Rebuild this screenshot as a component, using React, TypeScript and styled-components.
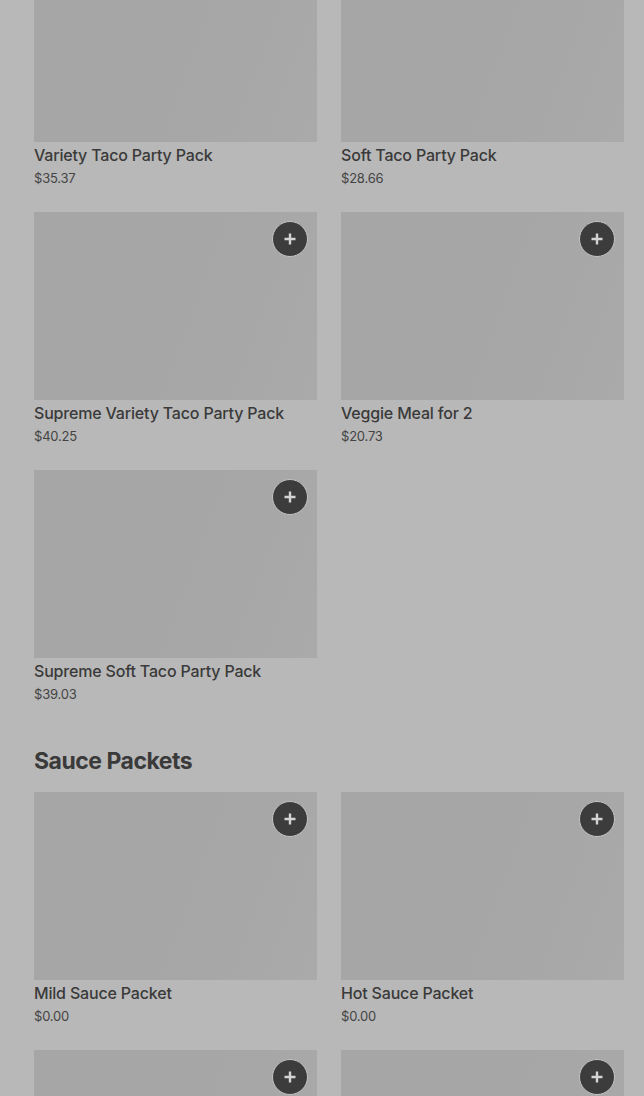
import React from "react";
import styled, { createGlobalStyle } from "styled-components";

const Global = createGlobalStyle`
  html, body { margin: 0; padding: 0; background: #b8b8b8; overflow: hidden; }
  body { font-family: Inter, "Noto Sans", sans-serif; }
`;

const Page = styled.div`
  width: 644px;
  height: 1096px;
  overflow: hidden;
  background: #b8b8b8;
  padding: 0 20px 0 34px;
  box-sizing: border-box;
`;

const Inner = styled.div`
  margin-top: -46px;
`;

const Grid = styled.div`
  display: grid;
  grid-template-columns: 283px 283px;
  column-gap: 24px;
  row-gap: 24px;
`;

const Card = styled.div`
  display: flex;
  flex-direction: column;
`;

const Thumb = styled.div`
  position: relative;
  height: 188px;
  background: linear-gradient(110deg, #a6a6a6 0%, #a6a6a6 55%, #aaaaaa 100%);
`;

const AddButton = styled.button`
  position: absolute;
  top: 9px;
  right: 9px;
  width: 36px;
  height: 36px;
  border-radius: 50%;
  border: 1px solid #c4c4c4;
  background: #3c3c3c;
  display: flex;
  align-items: center;
  justify-content: center;
  padding: 0;
  box-sizing: border-box;
`;

const Title = styled.div`
  margin-top: 3px;
  font-size: 16px;
  line-height: 20px;
  font-weight: 500;
  color: #3a3a3a;
  letter-spacing: -0.18px;
`;

const Price = styled.div`
  margin-top: 3px;
  font-size: 13px;
  line-height: 20px;
  color: #444444;
  letter-spacing: -0.2px;
`;

const Heading = styled.h2`
  margin: 43px 0 17px;
  font-size: 23px;
  line-height: 28px;
  font-weight: 700;
  color: #3a3a3a;
  letter-spacing: -0.5px;
`;

const Plus = () => (
  <svg width="14" height="14" viewBox="0 0 14 14">
    <path d="M7 1.5v11M1.5 7h11" stroke="#d4d4d4" strokeWidth="2.4" />
  </svg>
);

type Item = { name: string; price: string; add?: boolean };

const ItemCard = ({ name, price, add = true }: Item) => (
  <Card>
    <Thumb>
      {add && (
        <AddButton aria-label="Add">
          <Plus />
        </AddButton>
      )}
    </Thumb>
    <Title>{name}</Title>
    <Price>{price}</Price>
  </Card>
);

const packs: Item[] = [
  { name: "Variety Taco Party Pack", price: "$35.37", add: false },
  { name: "Soft Taco Party Pack", price: "$28.66", add: false },
  { name: "Supreme Variety Taco Party Pack", price: "$40.25" },
  { name: "Veggie Meal for 2", price: "$20.73" },
  { name: "Supreme Soft Taco Party Pack", price: "$39.03" },
];

const sauces: Item[] = [
  { name: "Mild Sauce Packet", price: "$0.00" },
  { name: "Hot Sauce Packet", price: "$0.00" },
  { name: "Fire Sauce Packet", price: "$0.00" },
  { name: "Diablo Sauce Packet", price: "$0.00" },
];

export default function App() {
  return (
    <Page>
      <Global />
      <Inner>
        <Grid>
          {packs.map((p) => (
            <ItemCard key={p.name} {...p} />
          ))}
        </Grid>
        <Heading>Sauce Packets</Heading>
        <Grid>
          {sauces.map((p) => (
            <ItemCard key={p.name} {...p} />
          ))}
        </Grid>
      </Inner>
    </Page>
  );
}
